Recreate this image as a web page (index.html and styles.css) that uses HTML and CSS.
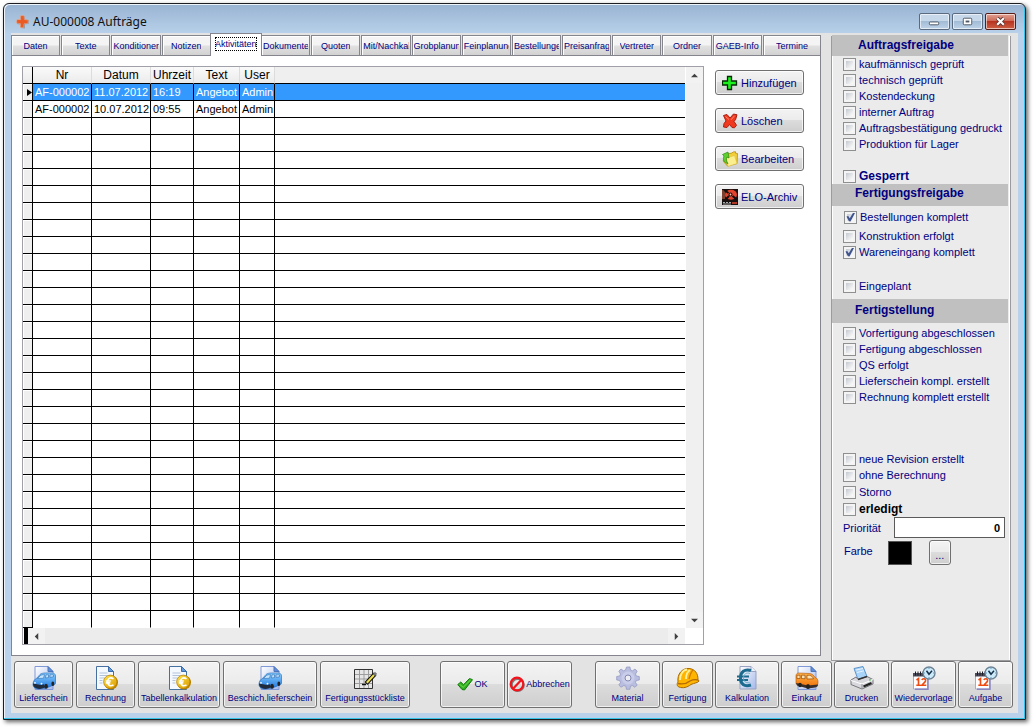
FILE: index.html
```html
<!DOCTYPE html>
<html lang="de">
<head>
<meta charset="utf-8">
<title>AU-000008 Aufträge</title>
<link rel="stylesheet" href="styles.css">
</head>
<body>
<svg class="defs" aria-hidden="true">
  <defs>
    <linearGradient id="gPage" x1="0" y1="0" x2="1" y2="1"><stop offset="0" stop-color="#fff"/><stop offset="1" stop-color="#a4b8ea"/></linearGradient>
    <linearGradient id="gBlue" x1="0" y1="0" x2="0" y2="1"><stop offset="0" stop-color="#8ad0ff"/><stop offset="1" stop-color="#1d74dc"/></linearGradient>
    <linearGradient id="gOrange" x1="0" y1="0" x2="0" y2="1"><stop offset="0" stop-color="#ffb347"/><stop offset="1" stop-color="#f0700a"/></linearGradient>
    <linearGradient id="gGold" x1="0" y1="0" x2="1" y2="1"><stop offset="0" stop-color="#ffe44d"/><stop offset="1" stop-color="#d99a00"/></linearGradient>
  </defs>
  <symbol id="page" viewBox="0 0 24 24">
    <path d="M3 .500h13l5 5v18H3z" fill="url(#gPage)" stroke="#7f98d6"/>
    <path d="M16 .500v5h5z" fill="#5f8fdc" stroke="#4c74bb"/>
  </symbol>
  <symbol id="delivery" viewBox="0 0 24 24">
    <use href="#page"/>
    <path d="M1 18c0-3 2-5 4-6l3-3.500c1-1 3-1.500 6-1.500h6c2 0 3.500 1 3.500 3v7c0 1-1 2-2 2l-7 3-8 1c-4-.5-5.500-2-5.500-5z" fill="url(#gBlue)" stroke="#1c63b3" stroke-width=".6"/>
    <path d="M5.500 12.500l3-3c1-.7 2-.8 4-.8l-1 3.500zM14 8.800h2.500v2.700l-3 .5zM18 8.800h3.500v2l-3.500.5z" fill="#c6e6ff" stroke="#2f6cb0" stroke-width=".6"/>
    <path d="M1 17.500l8 1.500 3-.8v3.500l-4 1.200c-4-.3-7-1.900-7-5.400z" fill="#202b3b"/>
    <ellipse cx="14" cy="20.300" rx="1.900" ry="2.500" fill="#222"/><ellipse cx="20.800" cy="17.800" rx="1.400" ry="2.200" fill="#222"/>
    <circle cx="3" cy="16.800" r=".9" fill="#fff"/><circle cx="9.500" cy="17.600" r=".9" fill="#fff"/>
  </symbol>
  <symbol id="invoice" viewBox="0 0 24 24">
    <path d="M2.500 .500h12l5 5v18h-17z" fill="#f4f8ff" stroke="#46709f"/>
    <path d="M14.500 .500v5h5z" fill="#5f9ae0" stroke="#3b6ba8"/>
    <path d="M5.500 7h8M5.500 9.500h8M5.500 12h5M5.500 14.500h3M5.500 17h3" stroke="#b3c4da"/>
    <circle cx="17" cy="16.500" r="7" fill="#b98200"/><circle cx="16.300" cy="15.800" r="6.700" fill="url(#gGold)" stroke="#b17b00" stroke-width=".7"/>
    <path d="M19.500 12.800c-3.500-2.300-6 0-6 3s2.500 5.300 6 3M11.800 15h5M11.800 16.900h4.500" fill="none" stroke="#fff" stroke-width="1.600"/>
  </symbol>
  <symbol id="calendar" viewBox="0 0 24 24">
    <path d="M1.500 7.500h14V23h-14z" fill="#fdfdff" stroke="#a9a9cf"/>
    <path d="M16 10v13.300H3" fill="none" stroke="#8a86bd" stroke-width="1.500"/>
    <path d="M1 7h13v3.500H1z" fill="#4a4a58"/><path d="M3.500 5.500v4M6 5.500v4M8.500 5.500v4M11 5.500v4" stroke="#1c1c24"/>
    <path d="M4.500 14l2-1.500v6.700M4.300 19.200h4.500M9.800 14c1-2 4.200-1.500 3.700 1-.3 1.300-2.700 2.700-3.700 4.200h4.500" fill="none" stroke="#f04a10" stroke-width="1.600"/>
    <circle cx="17" cy="7" r="6" fill="#cdeafa" stroke="#6d8497" stroke-width="1.400"/>
    <path d="M14.500 4.800L17 8.200l3-3.400" fill="none" stroke="#143048" stroke-width="1.500"/>
    <path d="M17 2v1M17 11v1M12 7h1M21 7h1" stroke="#5f98bb"/>
  </symbol>
</svg>

<div class="window">
  <header class="titlebar">
    <svg class="logo" viewBox="0 0 14 14"><path d="M4.500 1.500l4-.5.500 3.500 4 .5-.5 4-3.500.2-.2 4.300-4-.5.200-3.500-4-.6.500-4 3.200.2z" fill="#8c939c"/><path d="M4.500.800l3.500-.3.300 4 4 .5-.4 3.500-3.900.2-.3 4-3.500-.4.300-3.700-4-.6.400-3.500 3.800.2z" fill="#ea5a24" stroke="#f4b08d" stroke-width=".5"/></svg>
    <h1 class="title">AU-000008 Aufträge</h1>
    <div class="winbtns">
      <button class="winbtn" aria-label="Minimieren"><svg viewBox="0 0 30 16"><rect x="9.500" y="8.500" width="10" height="3" rx="1" fill="#fff" stroke="#4d5662"/></svg></button>
      <button class="winbtn" aria-label="Maximieren"><svg viewBox="0 0 30 16"><rect x="10.500" y="4.500" width="9" height="7" rx="1" fill="#fff" stroke="#4d5662"/><rect x="13.500" y="7.500" width="3" height="1" fill="#9db8d5" stroke="#4d5662"/></svg></button>
      <button class="winbtn close" aria-label="Schließen"><svg viewBox="0 0 30 16"><path d="M11.500 4.500l7 7M18.500 4.500l-7 7" stroke="#5a3a3a" stroke-width="4.200"/><path d="M11.500 4.500l7 7M18.500 4.500l-7 7" stroke="#fff" stroke-width="2.200"/></svg></button>
    </div>
  </header>

  <div class="client">
    <div class="upper">
      <main class="pages">
        <nav class="tabs" role="tablist">
          <button class="tab" role="tab"><span>Daten</span></button>
          <button class="tab" role="tab"><span>Texte</span></button>
          <button class="tab" role="tab"><span>Konditionen</span></button>
          <button class="tab" role="tab"><span>Notizen</span></button>
          <button class="tab active" role="tab" aria-selected="true"><span>Aktivitäten</span></button>
          <button class="tab" role="tab"><span>Dokumente</span></button>
          <button class="tab" role="tab"><span>Quoten</span></button>
          <button class="tab" role="tab"><span>Mit/Nachkalk</span></button>
          <button class="tab" role="tab"><span>Grobplanung</span></button>
          <button class="tab" role="tab"><span>Feinplanung</span></button>
          <button class="tab" role="tab"><span>Bestellungen</span></button>
          <button class="tab" role="tab"><span>Preisanfragen</span></button>
          <button class="tab" role="tab"><span>Vertreter</span></button>
          <button class="tab" role="tab"><span>Ordner</span></button>
          <button class="tab" role="tab"><span>GAEB-Info</span></button>
          <button class="tab last" role="tab"><span>Termine</span></button>
        </nav>
        <section class="page">
          <div class="gridbox">
            <table class="grid">
              <colgroup><col class="c-mark"><col class="c-date"><col class="c-date"><col class="c-time"><col class="c-text"><col class="c-user"><col></colgroup>
              <thead><tr><th></th><th>Nr</th><th>Datum</th><th>Uhrzeit</th><th>Text</th><th>User</th><th></th></tr></thead>
              <tbody>
                <tr class="selected"><td><svg class="marker" viewBox="0 0 5 7"><path d="M0 0l5 3.500L0 7z"/></svg></td><td>AF-000002</td><td>11.07.2012</td><td>16:19</td><td>Angebot</td><td>Admin</td><td></td></tr>
                <tr><td></td><td>AF-000002</td><td>10.07.2012</td><td>09:55</td><td>Angebot</td><td>Admin</td><td></td></tr>
                <tr><td><td><td><td><td><td><td></tr>
                <tr><td><td><td><td><td><td><td></tr>
                <tr><td><td><td><td><td><td><td></tr>
                <tr><td><td><td><td><td><td><td></tr>
                <tr><td><td><td><td><td><td><td></tr>
                <tr><td><td><td><td><td><td><td></tr>
                <tr><td><td><td><td><td><td><td></tr>
                <tr><td><td><td><td><td><td><td></tr>
                <tr><td><td><td><td><td><td><td></tr>
                <tr><td><td><td><td><td><td><td></tr>
                <tr><td><td><td><td><td><td><td></tr>
                <tr><td><td><td><td><td><td><td></tr>
                <tr><td><td><td><td><td><td><td></tr>
                <tr><td><td><td><td><td><td><td></tr>
                <tr><td><td><td><td><td><td><td></tr>
                <tr><td><td><td><td><td><td><td></tr>
                <tr><td><td><td><td><td><td><td></tr>
                <tr><td><td><td><td><td><td><td></tr>
                <tr><td><td><td><td><td><td><td></tr>
                <tr><td><td><td><td><td><td><td></tr>
                <tr><td><td><td><td><td><td><td></tr>
                <tr><td><td><td><td><td><td><td></tr>
                <tr><td><td><td><td><td><td><td></tr>
                <tr><td><td><td><td><td><td><td></tr>
                <tr><td><td><td><td><td><td><td></tr>
                <tr><td><td><td><td><td><td><td></tr>
                <tr><td><td><td><td><td><td><td></tr>
                <tr><td><td><td><td><td><td><td></tr>
                <tr><td><td><td><td><td><td><td></tr>
                <tr><td><td><td><td><td><td><td></tr>
              </tbody>
            </table>
            <div class="vscroll">
              <button aria-label="Nach oben"><svg viewBox="0 0 8 4"><path d="M0 4l4-4 4 4z"/></svg></button>
              <button aria-label="Nach unten"><svg viewBox="0 0 8 4"><path d="M0 0l4 4 4-4z"/></svg></button>
            </div>
            <div class="hscroll">
              <button aria-label="Nach links"><svg viewBox="0 0 8 8"><path d="M6 0L2 4l4 4z"/></svg></button>
              <button aria-label="Nach rechts"><svg viewBox="0 0 8 8"><path d="M2 0l4 4-4 4z"/></svg></button>
            </div>
          </div>
          <div class="actions">
            <button class="btn action"><svg viewBox="0 0 16 16"><path d="M5.500 1.500h4v4.500H14.500v4H9.500v4.500h-4V10H.500V6h5z" fill="#1cf01c" stroke="#042a04" stroke-width="1.300"/></svg>Hinzufügen</button>
            <button class="btn action"><svg viewBox="0 0 16 16"><path d="M1.500 2.500l3.500-1 3 3.500L11.500 1l3.500.800-1.500 5-1.500 1.500 2.500 4-2 2.500-2.500-.3-2.500-3L5 14.500l-3.500-.5.500-3.500 2-2.500z" fill="#f0381f" stroke="#a8200f"/><path d="M3.500 3.500l3.500 3M12.500 2.800l-3.500 4" stroke="#ff8a70"/></svg>Löschen</button>
            <button class="btn action"><svg viewBox="0 0 16 16"><path d="M5 3l5-1 1-1 2.500-.3v1.500l2 .3-.5 10-9.500 2.500L1 10z" fill="#f2cf3a" stroke="#b48d10" stroke-width=".8"/><path d="M4.500 7l8-2.500 2.500 8-9 3z" fill="#fbee8e" stroke="#d8b93a" stroke-width=".5"/><path d="M6 1L.500 3.500 2 5C.5 8 2 12 6 12.500 4 10.500 4 8 5 6l2 1z" fill="#5fd032" stroke="#2f8a10" stroke-width=".7"/></svg>Bearbeiten</button>
            <button class="btn action"><svg viewBox="0 0 16 16"><path d="M0 0h16v16H0z" fill="#1c0f0e"/><path d="M0 1h3v9H0z" fill="#7c4030"/><ellipse cx="9" cy="5.800" rx="6" ry="5" fill="#e3442c"/><circle cx="8.500" cy="5.500" r="2" fill="#1c0f0e"/><circle cx="8.500" cy="5.500" r=".9" fill="#f5c8b8"/><path d="M2 1l4.500 3M10.500 7l5 4M4 10l3-3" stroke="#111" stroke-width="2"/><path d="M0 12.500h16v3H0z" fill="#111"/><path d="M1 13.500h2M4 13.500h2M7 13.500h2M1 15h8" stroke="#aaa"/><path d="M10 14h5" stroke="#e3442c" stroke-width="1.500"/></svg>ELO-Archiv</button>
          </div>
        </section>
      </main>

      <aside class="side">
        <h2 class="band">Auftragsfreigabe</h2>
        <div class="checks">
          <label><input type="checkbox">kaufmännisch geprüft</label>
          <label><input type="checkbox">technisch geprüft</label>
          <label><input type="checkbox">Kostendeckung</label>
          <label><input type="checkbox">interner Auftrag</label>
          <label><input type="checkbox">Auftragsbestätigung gedruckt</label>
          <label><input type="checkbox">Produktion für Lager</label>
          <label class="strong apart"><input type="checkbox">Gesperrt</label>
        </div>
        <h2 class="band">Fertigungsfreigabe</h2>
        <div class="checks release">
          <label class="first"><input type="checkbox" checked>Bestellungen komplett</label>
          <label><input type="checkbox">Konstruktion erfolgt</label>
          <label><input type="checkbox" checked>Wareneingang komplett</label>
          <label class="apart"><input type="checkbox">Eingeplant</label>
        </div>
        <h2 class="band tall">Fertigstellung</h2>
        <div class="checks finish">
          <label><input type="checkbox">Vorfertigung abgeschlossen</label>
          <label><input type="checkbox">Fertigung abgeschlossen</label>
          <label><input type="checkbox">QS erfolgt</label>
          <label><input type="checkbox">Lieferschein kompl. erstellt</label>
          <label><input type="checkbox">Rechnung komplett erstellt</label>
        </div>
        <div class="checks state">
          <label><input type="checkbox">neue Revision erstellt</label>
          <label><input type="checkbox">ohne Berechnung</label>
          <label class="spaced"><input type="checkbox">Storno</label>
          <label class="strong black spaced"><input type="checkbox">erledigt</label>
        </div>
        <div class="field">
          <label for="prio">Priorität</label>
          <input id="prio" type="text" value="0">
        </div>
        <div class="field color">
          <span class="caption">Farbe</span>
          <span class="swatch"></span>
          <button class="btn more" aria-label="Farbe wählen">...</button>
        </div>
      </aside>
    </div>

    <footer class="toolbar">
      <div class="group docs">
        <button class="btn tool w59"><svg viewBox="0 0 24 24"><use href="#delivery"/></svg>Lieferschein</button>
        <button class="btn tool w59"><svg viewBox="0 0 24 24"><use href="#invoice"/></svg>Rechnung</button>
        <button class="btn tool w82"><svg viewBox="0 0 24 24"><use href="#invoice"/></svg>Tabellenkalkulation</button>
        <button class="btn tool w94"><svg viewBox="0 0 24 24"><use href="#delivery"/></svg>Beschich.lieferschein</button>
        <button class="btn tool w90"><svg viewBox="0 0 24 24"><path d="M2 4h17v18H2z" fill="#e6e6e6"/><path d="M2 8.500h17M2 13h17M2 17.500h17M6.500 4v18M11 4v18M15.500 4v18" stroke="#9d9d9d"/><path d="M1.500 3.500h18v19h-18z" fill="none" stroke="#333"/><path d="M9 18.500h4" stroke="#111" stroke-width="1.500"/><path d="M13 17.500l9-9.500" stroke="#111" stroke-width="4"/><path d="M13.800 16.700l7.200-7.700" stroke="#f1e04e" stroke-width="2"/><path d="M21 9l2-2.200" stroke="#777" stroke-width="3"/></svg>Fertigungsstückliste</button>
      </div>
      <div class="group decide">
        <button class="btn inline w65"><svg viewBox="0 0 16 16"><path d="M.8 8.500l3-2.500 2.700 2.700L12.500 2.500l3 1.200L7.500 14 5 13.500z" fill="#2fae1f" stroke="#167a10"/><path d="M2.500 8.300l3.700 3L13.500 4" fill="none" stroke="#74dd55"/></svg>OK</button>
        <button class="btn inline w65"><svg viewBox="0 0 16 16"><circle cx="8.700" cy="8.900" r="6" fill="none" stroke="#7c7c7c" stroke-width="2.200"/><path d="M4.500 12.300l7.500-8" stroke="#f2141c" stroke-width="2.200"/><circle cx="8" cy="8" r="6.300" fill="none" stroke="#f2141c" stroke-width="2.200"/></svg>Abbrechen</button>
      </div>
      <div class="group modules">
        <button class="btn tool w65"><svg viewBox="0 0 24 24"><g fill="#b9bee0" stroke="#8e94c0" stroke-width=".7"><path d="M10.500 1h3.500l.5 3 2 .8L19 3l2.200 2.200L19.500 8l.8 2 3 .5v3.500l-3 .5-.8 2 1.700 2.500-2.300 2.300-2.500-1.800-2 .8-.5 3h-3.500l-.5-3-2-.8L5 21.200 2.800 19l1.700-2.500-.8-2-3-.5v-3.500l3-.5.8-2L2.800 5.200 5 3l2.500 1.800 2-.8z"/></g><circle cx="12" cy="12" r="6.500" fill="#c9cdea"/><circle cx="12" cy="12" r="3" fill="#ececf2" stroke="#8288b2"/></svg>Material</button>
        <button class="btn tool w51"><svg viewBox="0 0 24 24"><path d="M2 16C1 8 6 2 13 2.500c6 .5 9 5 9 11l1 1.500c-1 2-5 2-8 3.500-4 3-8 4-12 2.500-2.500-1-2-4-1-5z" fill="#ffb400" stroke="#a86a00"/><path d="M4 14C4 8 7 4 11 3.500M10 13c0-4 1-7 4-9" fill="none" stroke="#fff0a0" stroke-width="1.800"/><path d="M13 13c1-4 2-7 4-9" fill="none" stroke="#d27d00" stroke-width="1.300"/><path d="M2 17.500c5 1 9 0 12-2.500 3-1.500 6-1.500 8-1" fill="none" stroke="#b36b00" stroke-width="1.300"/></svg>Fertigung</button>
        <button class="btn tool w64"><svg viewBox="0 0 24 24"><path d="M5 .500h11l5 5v17.500H5z" fill="url(#gPage)" stroke="#9aa3c0"/><path d="M16 .500v5h5" fill="#eef2ff" stroke="#9aa3c0"/><path d="M16 4.500C9.500 2.500 5.500 6 5.500 12s3.500 9 10.500 7" fill="none" stroke="#1c6b8f" stroke-width="3"/><path d="M2 10.500h12M2 14h11" stroke="#1c6b8f" stroke-width="2"/><path d="M15 7.500c-4-1.500-6.500 1-6.500 4.500s2.500 5.500 6 4.500" fill="none" stroke="#6db0c8"/></svg>Kalkulation</button>
        <button class="btn tool w51"><svg viewBox="0 0 24 24"><use href="#page"/><path d="M1 10c0-2 1-3 3-3l10 .5c3 0 5 2 6 4 2 .5 3 2 3 4.500 0 3-1 4-3 4.500l-7 1L3 19c-1-.5-2-1-2-2z" fill="url(#gOrange)" stroke="#b55308" stroke-width=".6"/><path d="M2 9.200h3v3.300H2zM6.500 9.200h3.500v3.500L6.500 12.500zM12 9.300h2.500c2 .3 3 1.500 4 3.500l-6.500.2z" fill="#ffe0b0" stroke="#7c3d08" stroke-width=".6"/><path d="M1 17l12 2.500 10-1c0 2-1 2.500-3 3l-7 1L2 19.500z" fill="#3a2e2a"/><ellipse cx="5" cy="19" rx="1.800" ry="2.300" fill="#222"/><ellipse cx="13" cy="20.500" rx="2" ry="2.500" fill="#222"/></svg>Einkauf</button>
        <button class="btn tool w55"><svg viewBox="0 0 24 24"><path d="M4 2.500l9-2 4 10-9 3z" fill="#a9d3f7" stroke="#5d94cc"/><path d="M6 4l7-1.500M7 6.500l7-1.700" stroke="#e6f3ff"/><path d="M1 14l5-3 2 2.500 9-3 6 3v4.500l-11 5L1 18.500z" fill="#d7d7dc" stroke="#77777f"/><path d="M1 14.500L12 18l11-4.500" fill="none" stroke="#fff"/><path d="M12 18v5" stroke="#8c8c92"/><path d="M13.500 20.500l8-3.500" stroke="#222" stroke-width="2.200"/><path d="M8 13.500l9-3" stroke="#333" stroke-width="1.400"/><circle cx="20" cy="14" r=".8" fill="#3a3"/></svg>Drucken</button>
        <button class="btn tool w65"><svg viewBox="0 0 24 24"><use href="#calendar"/></svg>Wiedervorlage</button>
        <button class="btn tool w55"><svg viewBox="0 0 24 24"><use href="#calendar"/></svg>Aufgabe</button>
      </div>
    </footer>
  </div>
</div>
</body>
</html>
```

FILE: styles.css
```css
* { box-sizing: border-box; }

body {
  margin: 0;
  padding: 3px 8px 8px 3px;
  min-height: 100vh;
  display: flex;
  background: #fff;
  color: #000080;
  font-family: "Liberation Sans", Arial, sans-serif;
  font-size: 11px;
}

button, input { font: inherit; color: inherit; margin: 0; }
.defs { position: absolute; width: 0; height: 0; }

/* window frame */
.window {
  flex: 1;
  display: flex;
  flex-direction: column;
  padding: 0 7px 6px 7px;
  border: 1px solid #1c1e22;
  border-radius: 6px 6px 0 0;
  background: linear-gradient(#98b3d2, #b9d1ea 30px);
  box-shadow: inset -1px -1px #35c4e8, inset 1px 1px #eef4fb, 2px 2px 4px rgba(0, 0, 0, .6);
}

.titlebar {
  display: flex;
  align-items: center;
  height: 29px;
  padding: 6px 2px 0 5px;
}
.logo { width: 14px; height: 14px; }
.title {
  flex: 1;
  margin: 0 0 0 3px;
  color: #111;
  font: 12px/16px "Noto Sans", "Open Sans", sans-serif;
}
.winbtns { display: flex; gap: 2px; }
.winbtn {
  width: 31px;
  height: 17px;
  padding: 0;
  border: 1px solid #5a6b80;
  border-radius: 2px;
  background: linear-gradient(#c6d8ea 45%, #a3bcd6 50%, #bdd3e9);
  box-shadow: inset 0 0 0 1px rgba(255, 255, 255, .6);
}
.winbtn svg { display: block; width: 100%; height: 100%; }
.winbtn.close {
  border-color: #571d16;
  background: linear-gradient(#e0a195, #cf6a57 45%, #b83420 50%, #cd5f45);
}

.client {
  flex: 1;
  display: flex;
  flex-direction: column;
  background: #e3e3e3;
}
.upper { flex: 1; display: flex; }

/* page control */
.pages {
  flex: 1;
  min-width: 0;
  display: flex;
  flex-direction: column;
  margin-bottom: 5px;
}
.tabs { display: flex; align-items: flex-end; height: 22px; }
.tab {
  flex: 1 1 49px;
  min-width: 0;
  height: 20px;
  margin-left: 1px;
  padding: 0 1px;
  border: 1px solid #85858d;
  border-bottom: 0;
  background: linear-gradient(#f4f4f4 45%, #e0e0e0 55%, #d2d2d2);
  box-shadow: inset 1px 1px #fff;
  font-size: 9px;
  line-height: 14px;
  display: flex;
  justify-content: center;
  align-items: center;
}
.tab span { max-width: 100%; overflow: hidden; white-space: nowrap; }
.tab:first-child { margin-left: 0; }
.tab.last { flex-basis: 58px; }
.tab.active {
  height: 23px;
  margin: 0 -2px -1px -1px;
  padding: 0 3px 2px;
  flex-basis: 52px;
  background: #fff;
  position: relative;
}
.tab.active span { outline: 1px dotted #000; outline-offset: -1px; }

.page {
  flex: 1;
  display: flex;
  align-items: flex-start;
  gap: 11px;
  padding: 10px 16px 10px 10px;
  border: 1px solid #85858d;
  background: #fff;
}

/* data grid */
.gridbox {
  flex: 1;
  display: grid;
  grid-template-columns: 1fr 18px;
  grid-template-rows: auto 16px;
  border: 1px solid #a0a0a8;
}
.grid {
  width: 100%;
  table-layout: fixed;
  border-collapse: separate;
  border-spacing: 0;
  color: #000;
}
.c-mark { width: 10px; }
.c-date { width: 59px; }
.c-time { width: 43px; }
.c-text { width: 46px; }
.c-user { width: 35px; }
.grid th, .grid td {
  height: 17px;
  padding: 0 0 0 2px;
  border-right: 1px solid #000;
  border-bottom: 1px solid #000;
  line-height: 16px;
  white-space: nowrap;
}
.grid th {
  padding: 0;
  border-right-color: #dcdcdc;
  background: linear-gradient(#fafafa, #ebebeb);
  font-size: 12px;
  font-weight: normal;
}
.grid th:first-child { border-right-color: #000; }
.grid th:last-child { background: #efefef; border-right: 0; }
.grid td:first-child { padding: 0; background: #efefef; box-shadow: inset 1px 1px #fff; }
.grid td:last-child { border-right: 0; }
.grid tbody tr:last-child td:not(:first-child) { border-bottom-color: #fff; }
.selected td { background: #3399ff; color: #fff; }
.marker { display: block; width: 5px; height: 7px; margin-left: 4px; }

.vscroll, .hscroll { display: flex; justify-content: space-between; background: #f0f0f0; }
.vscroll { flex-direction: column; border-left: 1px solid #fff; }
.hscroll { border-left: 4px solid #000; margin-left: 1px; background: #ececec; }
.vscroll button, .hscroll button {
  display: flex;
  align-items: center;
  justify-content: center;
  width: 17px;
  height: 16px;
  padding: 0;
  border: 0;
  background: #f2f2f2;
}
.vscroll svg, .hscroll svg { width: 7px; height: 7px; fill: #404040; }

/* push buttons */
.btn {
  border: 1px solid #707070;
  border-radius: 3px;
  background: linear-gradient(#f3f3f3, #ebebeb 49%, #dcdcdc 50%, #cecece);
  box-shadow: inset 0 0 0 1px rgba(255, 255, 255, .7);
  white-space: nowrap;
}
.actions { width: 89px; display: flex; flex-direction: column; gap: 13px; padding-top: 4px; }
.action {
  display: flex;
  align-items: center;
  gap: 3px;
  height: 25px;
  padding: 0 0 0 6px;
}
.action svg { width: 16px; height: 16px; }

/* release sidebar */
.side {
  width: 180px;
  margin: 3px 7px 0 10px;
  border: solid #9b9b9f;
  border-width: 0 1px 1px;
  background: #ebebeb;
  box-shadow: inset 1px 0 #fff, inset -1px 0 #fff;
}
.band {
  height: 21px;
  margin: -1px 2px 0 0;
  padding-left: 26px;
  background: #c0c0c0;
  font-size: 12px;
  font-weight: bold;
  line-height: 20px;
}
.band + .checks + .band { height: 22px; margin-top: 0; padding-left: 23px; line-height: 19px; }
.band + .checks + .band.tall { height: 24px; line-height: 23px; }
.checks { padding-left: 11px; }
.checks label {
  display: flex;
  align-items: center;
  gap: 3px;
  height: 16px;
}
.checks input {
  appearance: none;
  flex: none;
  display: grid;
  place-items: center;
  width: 13px;
  height: 13px;
  border: 1px solid #8e8f8f;
  background: linear-gradient(135deg, #b4bac4, #f8f8f8 75%);
  box-shadow: inset 0 0 0 2px #f4f4f4;
}
.checks input:checked::before {
  content: "";
  width: 9px;
  height: 9px;
  background: #40558f;
  clip-path: polygon(5% 45%, 25% 40%, 42% 65%, 80% 0, 100% 5%, 50% 100%, 32% 98%);
}
.checks .strong { font-size: 12px; font-weight: bold; }
.checks .black { color: #000; }
.checks .apart { margin-top: 16px; }
.release { padding-top: 3px; padding-bottom: 5px; }
.release .first { margin: 0 0 3px 1px; }
.release .apart { margin-top: 18px; }
.finish { padding-top: 2px; }
.state { padding-top: 46px; }
.state .spaced { margin-top: 1px; }

.field {
  display: flex;
  align-items: center;
  justify-content: space-between;
  padding: 0 5px 0 11px;
}
.field input {
  width: 111px;
  height: 21px;
  padding: 0 4px;
  border: 1px solid #5a5a5a;
  background: #fff;
  color: #000;
  font-weight: bold;
  text-align: right;
}
.color { justify-content: flex-start; margin-top: 2px; padding-left: 12px; }
.caption { padding-bottom: 4px; }
.swatch { width: 24px; height: 24px; margin: 0 17px 0 15px; border: 1px solid #555; background: #000; }
.more { width: 22px; height: 25px; padding: 4px 0 0; }

/* bottom toolbar */
.toolbar {
  display: flex;
  justify-content: space-between;
  padding: 0 5px 5px 3px;
}
.group { display: flex; gap: 2px; }
.docs { gap: 3px; }
.decide { margin-left: 7px; }
.tool, .inline { height: 47px; padding: 0; font-size: 9px; }
.tool { display: flex; flex-direction: column; align-items: center; gap: 2px; padding-top: 4px; line-height: 12px; }
.tool svg { width: 24px; height: 24px; }
.inline { display: flex; align-items: center; justify-content: center; gap: 1px; padding-bottom: 1px; }
.inline svg { width: 16px; height: 16px; }
.w51 { width: 51px; }
.w55 { width: 55px; }
.w59 { width: 59px; }
.w64 { width: 64px; }
.w65 { width: 65px; }
.w82 { width: 82px; }
.w90 { width: 90px; }
.w94 { width: 94px; }
```
